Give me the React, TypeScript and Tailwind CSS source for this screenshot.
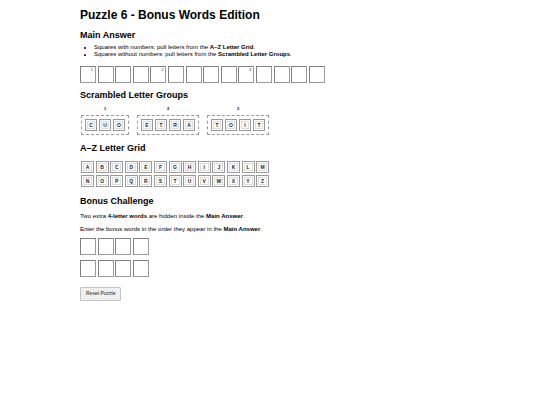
import React from 'react';

// Main answer squares; number marks a square that pulls from the A–Z grid
const answer: (number | null)[] = [1, null, null, null, 2, null, null, null, null, 3, null, null, null, null];

const groups = [
  { id: 1, letters: ['C', 'U', 'O'] },
  { id: 2, letters: ['E', 'T', 'R', 'A'] },
  { id: 3, letters: ['T', 'O', 'I', 'T'] },
];

const rowOne = 'ABCDEFGHIJKLM'.split('');
const rowTwo = 'NOPQRSTUVWXYZ'.split('');

function Tile({ letter, wide }: { letter: string; wide?: boolean }) {
  return (
    <div className={`${wide ? 'w-[13px]' : 'w-[12px]'} h-[12px] shrink-0 border border-[#9a9a9a] bg-white p-[1px]`}>
      <div className="w-full h-full border border-[#dcdcdc] bg-white text-center text-[5px] leading-[6px] font-bold text-[#222]">
        {letter}
      </div>
    </div>
  );
}

function EmptyBox({ num }: { num?: number | null }) {
  return (
    <div className="relative w-[16px] h-[17px] border border-[#9a9a9a] border-t-[#808080] border-l-[#808080] bg-white">
      {num && (
        <span className="absolute top-[1px] right-[2px] text-[4px] leading-none text-[#333]">{num}</span>
      )}
    </div>
  );
}

export default function App() {
  return (
    <div className="w-[540px] h-[405px] bg-white font-['Liberation_Sans',Arial,sans-serif] text-black antialiased pl-[80px] pt-[7px]">
      <h1 className="text-[12px] font-bold leading-[16px]">Puzzle 6 - Bonus Words Edition</h1>

      {/* Main Answer */}
      <h2 className="text-[9px] font-bold mt-[6.5px] leading-[11px]">Main Answer</h2>
      <ul className="mt-[3.5px] ml-[10px] list-disc text-[6px] leading-[7px] pl-[4px]">
        <li>
          Squares with numbers: pull letters from the <b>A–Z Letter Grid</b>.
        </li>
        <li>
          Squares without numbers: pull letters from the <b>Scrambled Letter Groups</b>.
        </li>
      </ul>
      <div className="flex gap-[1.6px] mt-[7.5px]">
        {answer.map((n, i) => (
          <EmptyBox key={i} num={n} />
        ))}
      </div>

      {/* Scrambled Letter Groups */}
      <h2 className="text-[9px] font-bold mt-[7px] leading-[11px]">Scrambled Letter Groups</h2>
      <div className="flex gap-[8px] mt-[5px] ml-[1px]">
        {groups.map((g) => (
          <div key={g.id} className="flex flex-col items-center">
            <div className="text-[4px] font-bold leading-[5px] mb-[4px]">{g.id}</div>
            <div className="h-[20px] flex items-center gap-[2px] border border-dashed border-[#9a9a9a] px-[3px]">
              {g.letters.map((l, i) => (
                <Tile key={i} letter={l} />
              ))}
            </div>
          </div>
        ))}
      </div>

      {/* A–Z grid */}
      <h2 className="text-[9px] font-bold mt-[8px] leading-[11px]">A–Z Letter Grid</h2>
      <div className="flex flex-col gap-[2px] mt-[7.5px] ml-[1px]">
        {[rowOne, rowTwo].map((row, r) => (
          <div key={r} className="flex gap-[1.6px]">
            {row.map((l) => (
              <Tile key={l} letter={l} wide />
            ))}
          </div>
        ))}
      </div>

      {/* Bonus Challenge */}
      <h2 className="text-[9px] font-bold mt-[8.5px] leading-[11px]">Bonus Challenge</h2>
      <p className="text-[6px] leading-[7px] mt-[6px]">
        Two extra <b>4-letter words</b> are hidden inside the <b>Main Answer</b>.
      </p>
      <p className="text-[6px] leading-[7px] mt-[6px]">
        Enter the bonus words in the order they appear in the <b>Main Answer</b>.
      </p>
      <div className="flex flex-col gap-[5px] mt-[5.5px]">
        {[0, 1].map((r) => (
          <div key={r} className="flex gap-[1.6px]">
            {[0, 1, 2, 3].map((i) => (
              <EmptyBox key={i} />
            ))}
          </div>
        ))}
      </div>

      <button className="mt-[10px] h-[14px] px-[5px] text-[5px] bg-[#efefef] border border-[#c4c4c4] rounded-[1px] text-[#222]">
        Reset Puzzle
      </button>
    </div>
  );
}
